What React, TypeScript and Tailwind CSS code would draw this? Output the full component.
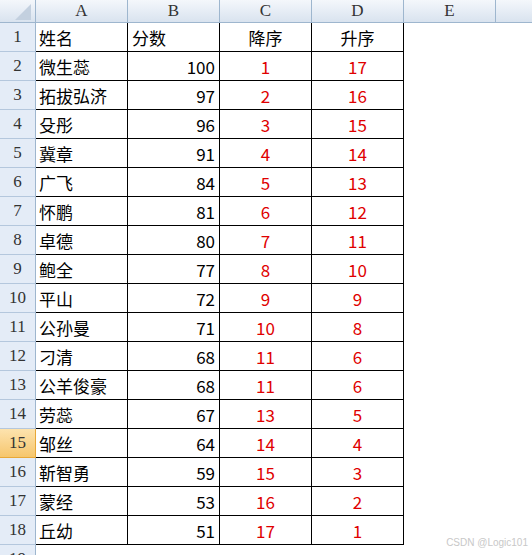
import React from 'react';

type Row = [string, number, number, number];

const rows: Row[] = [
  ['微生蕊', 100, 1, 17],
  ['拓拔弘济', 97, 2, 16],
  ['殳彤', 96, 3, 15],
  ['冀章', 91, 4, 14],
  ['广飞', 84, 5, 13],
  ['怀鹏', 81, 6, 12],
  ['卓德', 80, 7, 11],
  ['鲍全', 77, 8, 10],
  ['平山', 72, 9, 9],
  ['公孙曼', 71, 10, 8],
  ['刁清', 68, 11, 6],
  ['公羊俊豪', 68, 11, 6],
  ['劳蕊', 67, 13, 5],
  ['邹丝', 64, 14, 4],
  ['靳智勇', 59, 15, 3],
  ['蒙经', 53, 16, 2],
  ['丘幼', 51, 17, 1],
];

const colHead =
  'h-[23px] flex items-center justify-center border-r border-b border-[#9eb6ce] bg-linear-to-b from-[#f4f7fb] to-[#d9e3ef] font-["Liberation_Serif",serif] text-[17px] text-[#333]';

const cell =
  'h-[29px] flex items-center border-r border-b border-black font-["Noto_Sans_CJK_SC",sans-serif] text-[17px] leading-none';

function RowHead({ n, selected }: { n: number; selected?: boolean }) {
  return (
    <div
      className={
        selected
          ? 'h-[29px] flex items-center justify-center border-r border-b border-[#e8a838] bg-linear-to-b from-[#fde3ae] to-[#f6c66c] font-["Liberation_Serif",serif] text-[17px] text-[#333]'
          : 'h-[29px] flex items-center justify-center border-r border-b border-r-[#9eb6ce] border-b-[#b4c7dd] bg-[#e4ecf7] font-["Liberation_Serif",serif] text-[17px] text-[#333]'
      }
    >
      {n}
    </div>
  );
}

function Blank() {
  return <div className="h-[29px] bg-white" />;
}

export default function App() {
  return (
    <div className="relative w-[532px] h-[555px] overflow-hidden bg-white">
      <div className="grid grid-cols-[36px_repeat(6,92px)]">
        {/* corner */}
        <div className="h-[23px] relative border-r border-b border-[#9eb6ce] bg-linear-to-b from-[#f4f7fb] to-[#d9e3ef]">
          <svg className="absolute left-[14px] top-[3px]" width="18" height="18" viewBox="0 0 18 18">
            <polygon points="17,1 17,17 1,17" fill="#c3d0df" />
          </svg>
        </div>
        {['A', 'B', 'C', 'D', 'E', 'F'].map((c) => (
          <div key={c} className={colHead}>
            {c === 'F' ? '' : c}
          </div>
        ))}

        {/* header row */}
        <RowHead n={1} />
        <div className={cell + ' pl-[3px] text-black'}>姓名</div>
        <div className={cell + ' pl-[4px] text-black'}>分数</div>
        <div className={cell + ' justify-center text-black'}>降序</div>
        <div className={cell + ' justify-center text-black'}>升序</div>
        <Blank />
        <Blank />

        {rows.map(([name, score, desc, asc], i) => (
          <React.Fragment key={i}>
            <RowHead n={i + 2} selected={i + 2 === 15} />
            <div className={cell + ' pl-[3px] text-black'}>{name}</div>
            <div className={cell + ' justify-end pr-[4px] text-black'}>{score}</div>
            <div className={cell + ' justify-center text-[#e00000]'}>{desc}</div>
            <div className={cell + ' justify-center text-[#e00000]'}>{asc}</div>
            <Blank />
            <Blank />
          </React.Fragment>
        ))}

        <RowHead n={19} />
        <Blank />
        <Blank />
        <Blank />
        <Blank />
        <Blank />
        <Blank />
      </div>

      <div className="absolute right-[4px] top-[535px] font-['Liberation_Sans',sans-serif] text-[10px] text-[#c8c8c8]">
        CSDN @Logic101
      </div>
    </div>
  );
}
